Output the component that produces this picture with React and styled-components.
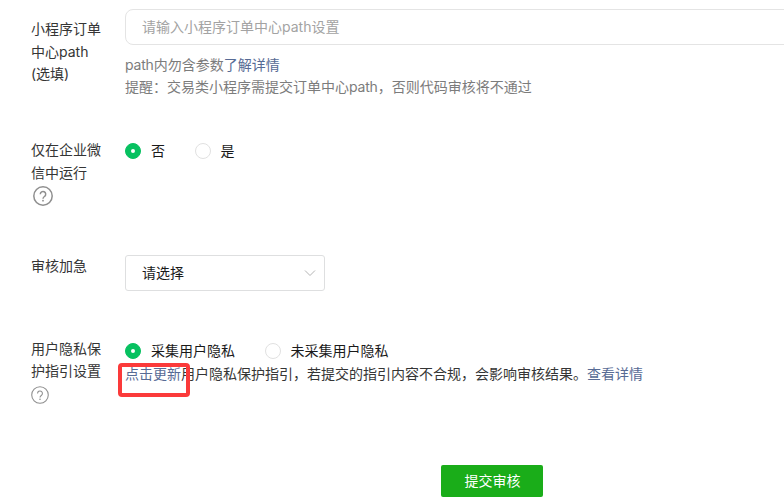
import styled, { createGlobalStyle } from "styled-components";

const GlobalStyle = createGlobalStyle`
  *,
  *::after {
    box-sizing: border-box;
  }
  body {
    margin: 0;
    background-color: #fff;
    font-family: Inter, "Noto Sans CJK SC", sans-serif;
    font-size: 14px;
    line-height: 22.4px;
    color: #353535;
  }
`;

const Wrapper = styled.div`
  width: 784px;
  height: 504px;
  padding: 9px 0 0 31px;
  overflow: hidden;
`;

const Row = styled.div`
  height: ${(props) => props.$height}px;
  display: flex;
  align-items: flex-start;
  gap: 24px;
`;

const Label = styled.div`
  width: 70px;
  flex-shrink: 0;
  padding-top: ${(props) => props.$top || 0}px;
`;

const Content = styled.div`
  flex: 1;
  min-width: 0;
  padding-top: ${(props) => props.$top || 0}px;
`;

const Input = styled.input`
  display: block;
  width: 680px;
  height: 36px;
  padding: 0 16px 2px;
  border: 1px solid #e4e4e4;
  border-radius: 8px;
  font: inherit;
  outline: none;

  &::placeholder {
    color: #a3a3a3;
  }
`;

const Tips = styled.p`
  margin: 9px 0 0;
  color: #7c7c7c;
`;

const Latin = styled.span`
  letter-spacing: -0.2px;
`;

const Link = styled.a`
  color: #576b95;
  text-decoration: none;
`;

const Help = styled.svg`
  display: block;
  width: ${(props) => props.$size}px;
  height: ${(props) => props.$size}px;
  margin: ${(props) => props.$margin};
`;

const Radios = styled.div`
  height: 24px;
  display: flex;
  align-items: center;
`;

const Radio = styled.label`
  display: flex;
  align-items: center;
  gap: 10px;
  margin-right: 29.6px;
  color: #1a1a1a;
`;

const Dot = styled.span`
  width: 16px;
  height: 16px;
  display: flex;
  justify-content: center;
  align-items: center;
  border: 1px solid ${(props) => (props.$checked ? "#07c160" : "#e1e1e1")};
  border-radius: 50%;
  background-color: ${(props) => (props.$checked ? "#07c160" : "#fff")};

  &::after {
    content: "";
    width: 4px;
    height: 4px;
    border-radius: 50%;
    background-color: #fff;
  }
`;

const Select = styled.div`
  width: 200px;
  height: 36px;
  display: flex;
  justify-content: space-between;
  align-items: center;
  padding: 0 8px 0 16px;
  border: 1px solid #dedfe0;
  border-radius: 3px;
  color: #1a1a1a;
`;

const Privacy = styled.div`
  color: #353535;
`;

const Marked = styled.span`
  position: relative;

  &::after {
    content: "";
    position: absolute;
    top: -2px;
    left: -7px;
    width: 72px;
    height: 34px;
    border: 4px solid #fb3a3a;
    border-radius: 4px;
  }
`;

const Footer = styled.div`
  padding-left: 410px;
`;

const Submit = styled.button`
  display: block;
  width: 102px;
  height: 32px;
  padding: 0 0 0 1px;
  border: none;
  border-radius: 2px;
  background-color: #1aad19;
  font: inherit;
  color: #fff;
`;

const HelpIcon = ({ size, margin, stroke }) => (
  <Help $size={size} $margin={margin} viewBox="0 0 20 20" fill="none" stroke="#8f8f8f">
    <circle cx="10" cy="10" r="9.2" strokeWidth={stroke} />
    <path d="M7.3 8.2a2.7 2.7 0 1 1 4.4 2.1c-1 .8-1.7 1.2-1.7 2.5" strokeWidth={stroke} />
    <circle cx="10" cy="14.7" r=".9" fill="#8f8f8f" stroke="none" />
  </Help>
);

const RadioGroup = ({ options }) => (
  <Radios>
    {options.map((option, index) => (
      <Radio key={option}>
        <Dot $checked={index === 0} />
        {option}
      </Radio>
    ))}
  </Radios>
);

const App = () => {
  return (
    <>
      <GlobalStyle />
      <Wrapper>
        <Row $height={130}>
          <Label $top={9.3}>小程序订单中心path (选填)</Label>
          <Content>
            <Input placeholder="请输入小程序订单中心path设置" />
            <Tips>
              <Latin>path</Latin>内勿含参数<Link>了解详情</Link>
              <br />
              提醒：交易类小程序需提交订单中心<Latin>path</Latin>，否则代码审核将不通过
            </Tips>
          </Content>
        </Row>
        <Row $height={116}>
          <Label $top={0.3}>
            仅在企业微信中运行
            <HelpIcon size={20} stroke={1.5} margin="1.9px 0 0 2px" />
          </Label>
          <Content>
            <RadioGroup options={["否", "是"]} />
          </Content>
        </Row>
        <Row $height={83}>
          <Label>审核加急</Label>
          <Content>
            <Select>
              请选择
              <svg width="12" height="8" viewBox="0 0 12 8" fill="none" stroke="#b4b4b4">
                <path d="M1 1.5l5 5 5-5" />
              </svg>
            </Select>
          </Content>
        </Row>
        <Row $height={127}>
          <Label>
            用户隐私保护指引设置
            <HelpIcon size={18} stroke={1.2} margin="3.2px 0 0 0" />
          </Label>
          <Content $top={1}>
            <RadioGroup options={["采集用户隐私", "未采集用户隐私"]} />
            <Privacy>
              <Marked>
                <Link>点击更新</Link>
              </Marked>
              用户隐私保护指引，若提交的指引内容不合规，会影响审核结果。
              <Link>查看详情</Link>
            </Privacy>
          </Content>
        </Row>
        <Footer>
          <Submit>提交审核</Submit>
        </Footer>
      </Wrapper>
    </>
  );
};

export default App;
